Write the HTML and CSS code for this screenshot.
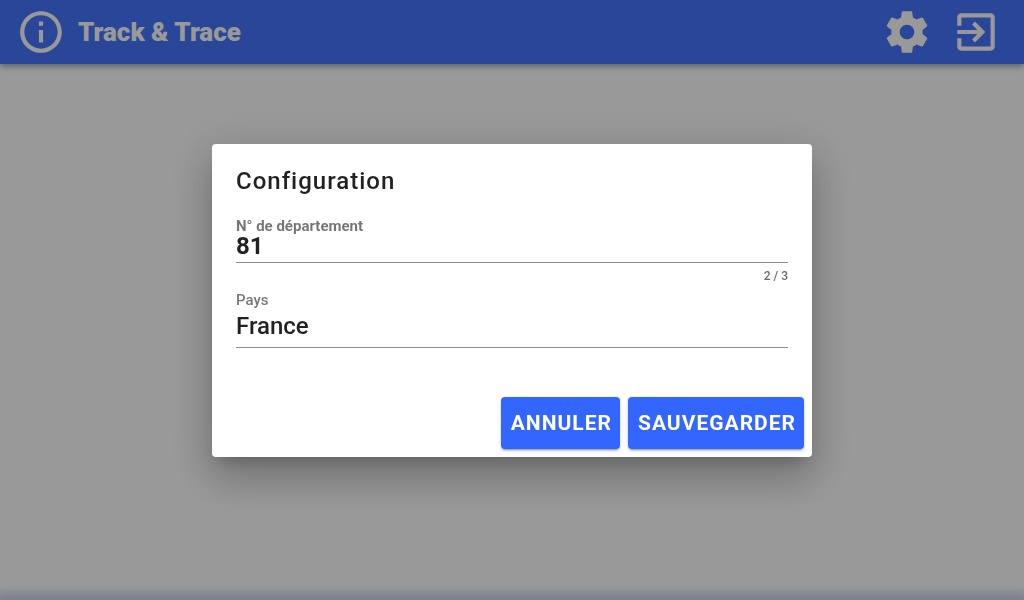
FILE: index.html
```html
<!DOCTYPE html>
<html lang="fr">
<head>
    <meta charset="UTF-8">
    <meta name="viewport" content="width=device-width, initial-scale=1.0">
    <title>Track &amp; Trace</title>
    <link rel="stylesheet" href="styles.css">
</head>
<body>

    <header class="toolbar">
        <button class="icon-button" type="button" aria-label="Informations">
            <svg viewBox="0 0 24 24"><path d="M11 7h2v2h-2zm0 4h2v6h-2zm1-9C6.48 2 2 6.48 2 12s4.48 10 10 10 10-4.48 10-10S17.52 2 12 2zm0 18c-4.41 0-8-3.59-8-8s3.59-8 8-8 8 3.59 8 8-3.59 8-8 8z"/></svg>
        </button>
        <h1 class="toolbar-title">Track &amp; Trace</h1>
        <nav class="toolbar-actions">
            <button class="icon-button" type="button" aria-label="Configuration">
                <svg viewBox="0 0 24 24"><path d="M19.43 12.98c.04-.32.07-.64.07-.98s-.03-.66-.07-.98l2.11-1.65c.19-.15.24-.42.12-.64l-2-3.46c-.12-.22-.39-.3-.61-.22l-2.49 1c-.52-.4-1.08-.73-1.69-.98l-.38-2.65C14.46 2.18 14.25 2 14 2h-4c-.25 0-.46.18-.49.42l-.38 2.65c-.61.25-1.17.59-1.69.98l-2.49-1c-.23-.09-.49 0-.61.22l-2 3.46c-.13.22-.07.49.12.64l2.11 1.65c-.04.32-.07.65-.07.98s.03.66.07.98l-2.11 1.65c-.19.15-.24.42-.12.64l2 3.46c.12.22.39.3.61.22l2.49-1c.52.4 1.08.73 1.69.98l.38 2.65c.03.24.24.42.49.42h4c.25 0 .46-.18.49-.42l.38-2.65c.61-.25 1.17-.59 1.69-.98l2.49 1c.23.09.49 0 .61-.22l2-3.46c.12-.22.07-.49-.12-.64l-2.11-1.65zM12 15.5c-1.93 0-3.5-1.57-3.5-3.5s1.57-3.5 3.5-3.5 3.5 1.57 3.5 3.5-1.57 3.5-3.5 3.5z"/></svg>
            </button>
            <button class="icon-button" type="button" aria-label="Quitter">
                <svg viewBox="0 0 24 24"><path d="M10.09 15.59L11.5 17l5-5-5-5-1.41 1.41L12.67 11H3v2h9.67l-2.58 2.59zM19 3H5c-1.11 0-2 .9-2 2v4h2V5h14v14H5v-4H3v4c0 1.1.89 2 2 2h14c1.1 0 2-.9 2-2V5c0-1.1-.9-2-2-2z"/></svg>
            </button>
        </nav>
    </header>

    <main class="page"></main>
    <footer class="bottom-glow"></footer>

    <div class="scrim">
        <form class="dialog" role="dialog" aria-labelledby="dialogTitle">
            <h2 class="dialog-title" id="dialogTitle">Configuration</h2>
            <div class="dialog-content">
                <div class="field field-strong">
                    <label for="department">N° de département</label>
                    <input id="department" type="text" maxlength="3" value="81">
                </div>
                <div class="counter">2 / 3</div>
                <div class="field field-country">
                    <label for="country">Pays</label>
                    <input id="country" type="text" value="France">
                </div>
            </div>
            <div class="dialog-actions">
                <button class="button" type="button">Annuler</button>
                <button class="button" type="button">Sauvegarder</button>
            </div>
        </form>
    </div>

</body>
</html>
```
FILE: styles.css
```css
* {
    box-sizing: border-box;
}
body {
    margin: 0;
    min-height: 100vh;
    display: flex;
    flex-direction: column;
    font-family: Roboto, sans-serif;
    background: white;
    overflow: hidden;
}

/* Toolbar */
.toolbar {
    display: flex;
    align-items: center;
    height: 64px;
    padding: 0 23px 0 16px;
    background: #4775ff;
    color: white;
    box-shadow: 0 2px 4px -1px rgba(0, 0, 0, .2), 0 4px 5px rgba(0, 0, 0, .14), 0 1px 10px rgba(0, 0, 0, .12);
}
.icon-button {
    display: flex;
    padding: 0;
    border: 0;
    background: none;
    color: inherit;
    cursor: pointer;
}
.icon-button svg {
    width: 50px;
    height: 50px;
    fill: currentColor;
}
.toolbar-title {
    flex: 1;
    margin: 0 0 0 12px;
    font-size: 26px;
    font-weight: 900;
    line-height: 32px;
}
.toolbar-actions {
    display: flex;
    gap: 19px;
}
.page {
    flex: 1;
}
.bottom-glow {
    box-shadow: 0 0 12px 5px #b0c2d4;
}

/* Dialog */
.scrim {
    position: fixed;
    inset: 0;
    display: flex;
    align-items: center;
    justify-content: center;
    background: rgba(0, 0, 0, .4);
}
.dialog {
    width: 100%;
    max-width: 600px;
    border-radius: 4px;
    background: white;
    color: rgba(0, 0, 0, .87);
    box-shadow: 0 11px 15px -7px rgba(0, 0, 0, .2), 0 24px 38px 3px rgba(0, 0, 0, .14), 0 9px 46px 8px rgba(0, 0, 0, .12);
}
.dialog-title {
    margin: 0;
    padding: 21px 24px;
    font-size: 24px;
    font-weight: 500;
    line-height: 32px;
    letter-spacing: 1px;
}
.dialog-content {
    padding: 0 24px;
}
.field {
    display: flex;
    flex-direction: column;
    border-bottom: 1px solid #8c8c8c;
}
.field label {
    color: rgba(0, 0, 0, .54);
    font-size: 15px;
    font-weight: 500;
    line-height: 16px;
}
.field input {
    width: 100%;
    height: 32px;
    margin-top: 2px;
    padding: 0;
    border: 0;
    outline: 0;
    background: none;
    color: inherit;
    font-family: inherit;
    font-size: 24px;
    font-weight: 500;
}
.field-strong label {
    font-weight: 700;
}
.field-strong input {
    height: 24px;
    margin-top: 0;
    margin-bottom: 4px;
    font-weight: 700;
}
.field-country input {
    margin-bottom: 5px;
}
.counter {
    padding: 5px 0 8px;
    color: rgba(0, 0, 0, .6);
    font-size: 12px;
    font-weight: 500;
    line-height: 16px;
    text-align: right;
}
.dialog-actions {
    display: flex;
    justify-content: flex-end;
    gap: 8px;
    padding: 49px 8px 8px;
}
.button {
    height: 52px;
    padding: 0 8px 0 10px;
    border: 0;
    border-radius: 4px;
    background: #3366ff;
    color: white;
    font-family: inherit;
    font-size: 21px;
    font-weight: 700;
    letter-spacing: 1px;
    text-transform: uppercase;
    cursor: pointer;
    box-shadow: 0 3px 1px -2px rgba(0, 0, 0, .2), 0 2px 2px rgba(0, 0, 0, .14), 0 1px 5px rgba(0, 0, 0, .12);
}
```
